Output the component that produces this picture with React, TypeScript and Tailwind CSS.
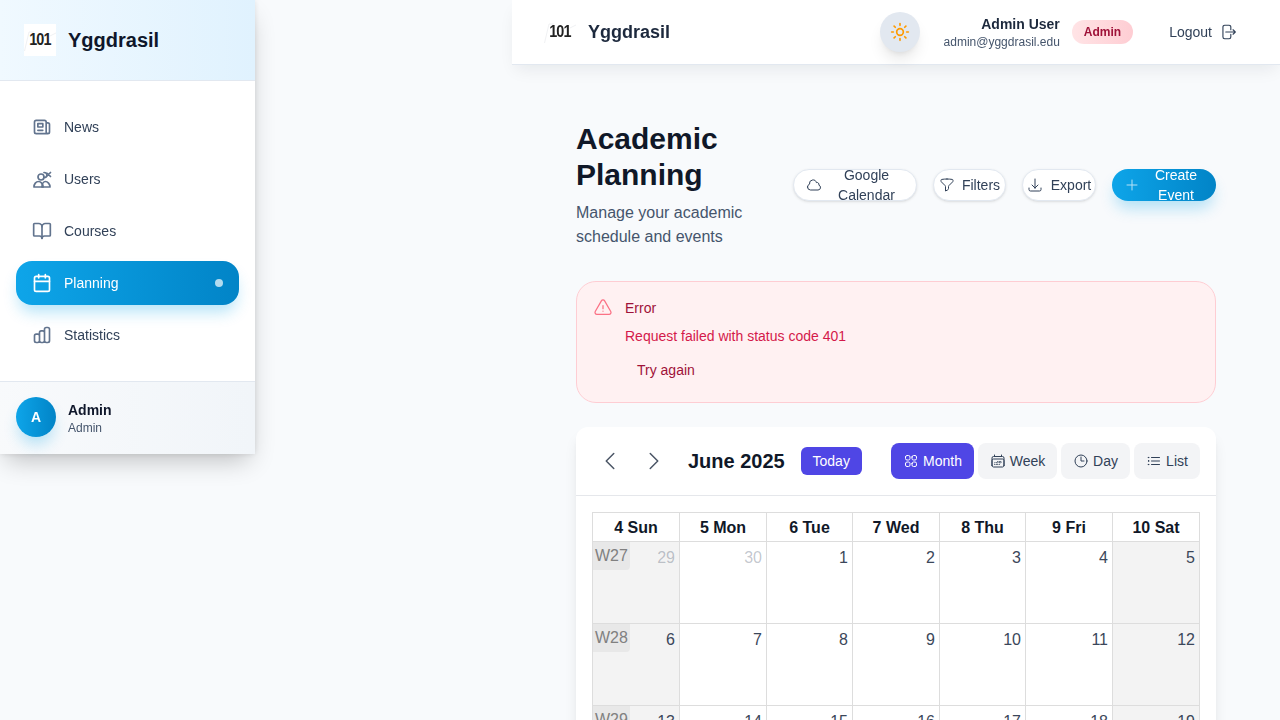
import React from 'react';
import { Sun, BookOpen, Calendar as CalendarIcon } from 'lucide-react';
import { HiOutlineNewspaper, HiOutlineChartBar } from 'react-icons/hi';
import {
  HiOutlineCloud,
  HiOutlineFunnel,
  HiOutlineArrowDownTray,
  HiOutlinePlus,
  HiOutlineExclamationTriangle,
  HiOutlineChevronLeft,
  HiOutlineChevronRight,
  HiOutlineSquares2X2,
  HiOutlineCalendarDays,
  HiOutlineClock,
  HiOutlineListBullet,
  HiOutlineArrowRightOnRectangle,
} from 'react-icons/hi2';

const UsersGlyph: React.FC = () => (
  <svg width="20" height="20" viewBox="0 0 20 20" fill="none" stroke="currentColor" strokeWidth="1.7" strokeLinecap="round" strokeLinejoin="round">
    <circle cx="9" cy="8" r="3" />
    <path d="M2 18c0-3 2-5.5 4.5-5.5S11 15 11 18z" />
    <path d="M10 18c0-3 1.500-5.500 3.500-5.500S18 15 18 18z" />
    <path d="M12 3.500c2 0 3 1 3 2.500s-1 2.500-3 2.500" />
    <path d="M15.500 4.500l3 3M18.500 3.500l-3 3" />
  </svg>
);

const Logo: React.FC<{ plain?: boolean }> = ({ plain }) => (
  <div className={`relative w-8 h-8 flex items-center justify-center ${plain ? 'bg-transparent' : 'bg-white'}`}>
    <svg className="absolute inset-0" width="32" height="32" viewBox="0 0 32 32" fill="none" stroke="#e5e7eb" strokeWidth="0.6">
      <path d="M0.500 27L5 8h5M26 12l6-3" />
    </svg>
    <span className="relative text-[16px] font-bold text-[#222] tracking-[-1px] scale-x-90">101</span>
  </div>
);

const NavItem: React.FC<{ icon: React.ReactNode; label: string; active?: boolean }> = ({ icon, label, active }) => (
  <div
    className={`h-11 flex items-center px-4 rounded-2xl text-sm ${
      active
        ? 'bg-gradient-to-r from-[#0ea5e9] to-[#0284c7] text-white shadow-[0_10px_15px_-3px_rgba(14,165,233,0.3)]'
        : 'text-slate-700'
    }`}
  >
    <span className={`mr-3 text-xl ${active ? 'text-white' : 'text-slate-500'}`}>{icon}</span>
    <span>{label}</span>
    {active && <span className="ml-auto w-2 h-2 rounded-full bg-white/70" />}
  </div>
);

const Sidebar: React.FC = () => (
  <aside className="w-[255px] h-[454px] shrink-0 bg-white shadow-[0_12px_24px_-6px_rgba(0,0,0,0.24),0_0_6px_rgba(15,23,42,0.1)] z-10 flex flex-col backdrop-blur-sm">
    <div className="h-[81px] shrink-0 flex items-center px-6 gap-3 border-b border-slate-200 bg-gradient-to-r from-[#f0f9ff] to-[#e0f2fe]">
      <Logo />
      <span className="text-xl font-bold text-slate-900">Yggdrasil</span>
    </div>
    <nav className="flex-1 px-4 py-6 flex flex-col gap-2">
      <NavItem icon={<HiOutlineNewspaper />} label="News" />
      <NavItem icon={<UsersGlyph />} label="Users" />
      <NavItem icon={<BookOpen size={20} />} label="Courses" />
      <NavItem icon={<CalendarIcon size={20} />} label="Planning" active />
      <NavItem icon={<HiOutlineChartBar />} label="Statistics" />
    </nav>
    <div className="h-[73px] shrink-0 border-t border-slate-200 bg-gradient-to-r from-slate-50 to-slate-100 flex items-center px-4 gap-3">
      <div className="w-10 h-10 mb-0.5 rounded-full bg-gradient-to-r from-[#0ea5e9] to-[#0284c7] text-white text-sm font-bold flex items-center justify-center shadow-[0_10px_15px_-3px_rgba(14,165,233,0.3)]">
        A
      </div>
      <div>
        <div className="text-sm font-bold text-slate-900 leading-5">Admin</div>
        <div className="text-xs text-slate-600 leading-4">Admin</div>
      </div>
    </div>
  </aside>
);

const Header: React.FC = () => (
  <header className="h-[65px] shrink-0 bg-white border-b border-slate-200 shadow-[0_8px_16px_-4px_rgba(15,23,42,0.08)] backdrop-blur-sm flex items-center pl-8 pr-11">
    <Logo plain />
    <span className="ml-3 text-lg font-bold text-slate-800">Yggdrasil</span>
    <div className="ml-auto w-10 h-10 rounded-full bg-slate-200 shadow-lg flex items-center justify-center text-amber-500">
      <Sun size={20} />
    </div>
    <div className="ml-6 text-right">
      <div className="text-sm font-bold text-slate-800 leading-5">Admin User</div>
      <div className="text-xs text-slate-600 leading-4">admin@yggdrasil.edu</div>
    </div>
    <span className="ml-3 h-6 px-3 rounded-full bg-gradient-to-r from-[#ffe4e6] to-[#fecdd3] text-[#9f1239] text-xs font-bold flex items-center">
      Admin
    </span>
    <div className="ml-9 flex items-center gap-[7px] text-sm text-slate-700">
      Logout <HiOutlineArrowRightOnRectangle className="text-lg -mr-px" />
    </div>
  </header>
);

const PillButton: React.FC<{ icon: React.ReactNode; label: string; className: string }> = ({ icon, label, className }) => (
  <button className={`h-8 rounded-full flex items-center justify-center px-3 text-sm leading-5 text-slate-700 bg-white border border-slate-200 shadow-sm backdrop-blur-sm ${className}`}>
    <span className="text-base shrink-0">{icon}</span>
    <span className="text-center">{label}</span>
  </button>
);

const ViewTab: React.FC<{ icon: React.ReactNode; label: string; active?: boolean; width: string }> = ({ icon, label, active, width }) => (
  <button
    className={`h-9 rounded-lg flex items-center justify-center gap-1 text-sm ${width} ${
      active ? 'bg-[#4f46e5] text-white' : 'bg-gray-100 text-slate-700'
    }`}
  >
    <span className="text-base">{icon}</span>
    {label}
  </button>
);

const headers = ['4 Sun', '5 Mon', '6 Tue', '7 Wed', '8 Thu', '9 Fri', '10 Sat'];
const weeks = [
  { label: 'W27', days: [29, 30, 1, 2, 3, 4, 5] },
  { label: 'W28', days: [6, 7, 8, 9, 10, 11, 12] },
  { label: 'W29', days: [13, 14, 15, 16, 17, 18, 19] },
];

const Calendar: React.FC = () => (
  <section className="bg-white rounded-xl shadow-lg">
    <div className="h-[69px] border-b border-gray-200 flex items-center px-4">
      <button className="w-9 h-9 flex items-center justify-center text-gray-600 text-2xl"><HiOutlineChevronLeft /></button>
      <button className="ml-2 w-9 h-9 flex items-center justify-center text-gray-600 text-2xl"><HiOutlineChevronRight /></button>
      <h2 className="ml-4 text-xl font-bold text-gray-900">June 2025</h2>
      <button className="ml-4 h-7 w-[61px] rounded-md bg-[#4f46e5] text-white text-sm">Today</button>
      <div className="ml-auto flex gap-1">
        <ViewTab icon={<HiOutlineSquares2X2 />} label="Month" active width="w-[83px]" />
        <ViewTab icon={<HiOutlineCalendarDays />} label="Week" width="w-[79px]" />
        <ViewTab icon={<HiOutlineClock />} label="Day" width="w-[69px]" />
        <ViewTab icon={<HiOutlineListBullet />} label="List" width="w-[66px]" />
      </div>
    </div>
    <div className="p-4">
      <table className="w-full table-fixed border-collapse">
        <colgroup>
          <col className="w-[87px]" />
          <col className="w-[87px]" />
          <col className="w-[86px]" />
          <col className="w-[87px]" />
          <col className="w-[86px]" />
          <col className="w-[87px]" />
          <col className="w-[87px]" />
        </colgroup>
        <thead>
          <tr>
            {headers.map((h) => (
              <th key={h} className="h-[29px] border border-[#ddd] text-base font-bold text-gray-900 p-0 pt-px">{h}</th>
            ))}
          </tr>
        </thead>
        <tbody>
          {weeks.map((w) => (
            <tr key={w.label}>
              {w.days.map((d, i) => {
                const weekend = i === 0 || i === 6;
                const muted = w.label === 'W27' && i < 2;
                return (
                  <td key={d} className={`relative h-[82px] border border-[#ddd] align-top text-right p-1 text-base ${weekend ? 'bg-[#f3f3f3]' : 'bg-white'} ${muted ? 'text-slate-700/30' : 'text-[#3b475a]'}`}>
                    {i === 0 && (
                      <span className="absolute left-0 top-0 w-[37px] h-7 rounded-br bg-[#e8e8e8] text-[#808080] text-left pl-0.5 leading-7">
                        {w.label}
                      </span>
                    )}
                    {d}
                  </td>
                );
              })}
            </tr>
          ))}
        </tbody>
      </table>
    </div>
  </section>
);

const App: React.FC = () => (
  <div className="h-screen overflow-hidden flex bg-slate-50 font-['Liberation_Sans',Arial,sans-serif]">
    <Sidebar />
    <div className="w-[768px] ml-auto shrink-0 flex flex-col">
      <Header />
      <main className="px-16 pt-14">
        <div className="flex items-center justify-between">
          <div className="w-[200px]">
            <h1 className="text-3xl font-bold text-gray-900">Academic Planning</h1>
            <p className="mt-2 text-base text-slate-600">Manage your academic schedule and events</p>
          </div>
          <div className="flex gap-4">
            <PillButton icon={<HiOutlineCloud />} label="Google Calendar" className="w-[124px] gap-[7px]" />
            <PillButton icon={<HiOutlineFunnel />} label="Filters" className="w-[73px] gap-[7px]" />
            <PillButton icon={<HiOutlineArrowDownTray />} label="Export" className="w-[74px] gap-2" />
            <button className="h-8 w-[104px] rounded-full flex items-center justify-center px-3 gap-2 text-sm leading-5 text-white bg-gradient-to-r from-[#0ea5e9] to-[#0284c7] shadow-[0_10px_15px_-3px_rgba(14,165,233,0.3)] backdrop-blur-sm">
              <HiOutlinePlus className="text-base shrink-0 opacity-70" />
              <span className="text-center">Create Event</span>
            </button>
          </div>
        </div>
        <div className="mt-8 h-[122px] rounded-[20px] border border-[#fecdd3] bg-[#fff1f2] pl-4 pt-4 flex items-start gap-3 backdrop-blur-sm">
          <HiOutlineExclamationTriangle className="text-xl text-[#fb7185] shrink-0" />
          <div className="text-sm">
            <div className="text-[#9f1239] leading-5">Error</div>
            <div className="mt-2 text-[#d4194a] leading-5">Request failed with status code 401</div>
            <div className="mt-3.5 ml-3 text-[#9f1239] leading-5">Try again</div>
          </div>
        </div>
        <div className="mt-6">
          <Calendar />
        </div>
      </main>
    </div>
  </div>
);

export default App;
